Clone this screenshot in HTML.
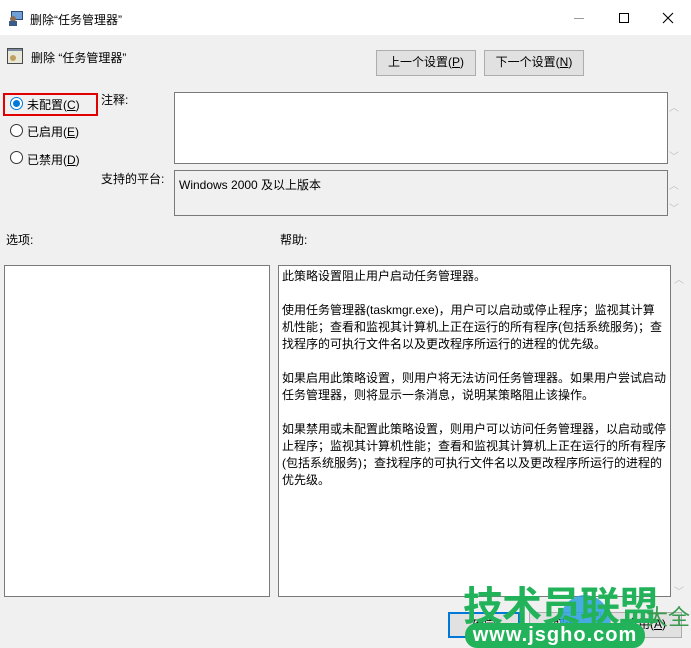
<!DOCTYPE html>
<html><head><meta charset="utf-8"><style>
*{margin:0;padding:0;box-sizing:border-box}
body{width:691px;height:648px;overflow:hidden;background:#f0f0f0;font-family:"Liberation Sans","Noto Sans CJK SC",sans-serif;font-size:12px;color:#000;position:relative}
.a{position:absolute}
.btn{position:absolute;background:#e1e1e1;border:1px solid #adadad;text-align:center;line-height:23px;font-size:12px}
.box{position:absolute;background:#fff;border:1px solid #7a7a7a}
.radio{position:absolute;width:13px;height:13px;border:1px solid #333;border-radius:50%;background:#fff}
.sb{position:absolute;color:#c0c0c0;font-size:10px}
</style></head><body>
<div class="a" style="left:0;top:0;width:691px;height:35px;background:#fff"></div>
<svg class="a" style="left:8px;top:10px" width="16" height="16"><rect x="3" y="1" width="12" height="9" fill="#2a4a7a"/><rect x="4" y="2" width="10" height="7" fill="#6fa0d8"/><circle cx="5" cy="9" r="3" fill="#8a6a50"/><rect x="1" y="11" width="8" height="5" fill="#3a5a8a"/></svg>
<div class="a" style="left:30px;top:11px">删除“任务管理器”</div>
<div class="a" style="left:574px;top:18px;width:10px;height:1px;background:#999"></div>
<div class="a" style="left:619px;top:13px;width:10px;height:10px;border:1px solid #000"></div>
<svg class="a" style="left:662px;top:12px" width="12" height="12"><path d="M1 1L11 11M11 1L1 11" stroke="#000" stroke-width="1.1"/></svg>

<svg class="a" style="left:7px;top:48px" width="16" height="16"><rect x="0" y="0" width="16" height="16" fill="#4a4a4a"/><rect x="1" y="3" width="14" height="12" fill="#e8e8d8"/><rect x="1" y="1" width="14" height="2" fill="#7a8aa0"/><circle cx="6" cy="10" r="3" fill="#c0a060"/></svg>
<div class="a" style="left:31px;top:49px">删除 “任务管理器”</div>
<div class="btn" style="left:376px;top:50px;width:100px;height:26px">上一个设置(<u>P</u>)</div>
<div class="btn" style="left:484px;top:50px;width:100px;height:26px">下一个设置(<u>N</u>)</div>

<div class="a" style="left:3px;top:93px;width:95px;height:23px;border:2px solid #e00000"></div>
<div class="radio" style="left:10px;top:97px;border-color:#0078d7"></div>
<div class="a" style="left:13px;top:100px;width:7px;height:7px;border-radius:50%;background:#0078d7"></div>
<div class="a" style="left:27px;top:96px">未配置(<u>C</u>)</div>
<div class="radio" style="left:10px;top:124px"></div>
<div class="a" style="left:27px;top:123px">已启用(<u>E</u>)</div>
<div class="radio" style="left:10px;top:151px"></div>
<div class="a" style="left:27px;top:151px">已禁用(<u>D</u>)</div>

<div class="a" style="left:101px;top:91px">注释:</div>
<div class="box" style="left:174px;top:92px;width:494px;height:72px"></div>
<div class="sb" style="left:669px;top:99px">︿</div>
<div class="sb" style="left:669px;top:148px">﹀</div>
<div class="a" style="left:101px;top:170px">支持的平台:</div>
<div class="box" style="left:174px;top:170px;width:494px;height:46px;background:#f0f0f0"></div>
<div class="a" style="left:179px;top:176px">Windows 2000 及以上版本</div>
<div class="sb" style="left:669px;top:177px">︿</div>
<div class="sb" style="left:669px;top:200px">﹀</div>

<div class="a" style="left:6px;top:231px">选项:</div>
<div class="a" style="left:280px;top:231px">帮助:</div>
<div class="box" style="left:4px;top:265px;width:266px;height:332px"></div>
<div class="box" style="left:278px;top:265px;width:393px;height:332px"></div>
<div class="sb" style="left:674px;top:271px">︿</div>
<div class="sb" style="left:674px;top:583px">﹀</div>
<div class="a" style="left:282px;top:268px;line-height:17px;font-size:12px;white-space:nowrap">此策略设置阻止用户启动任务管理器。<br><br>使用任务管理器(taskmgr.exe)，用户可以启动或停止程序；监视其计算<br>机性能；查看和监视其计算机上正在运行的所有程序(包括系统服务)；查<br>找程序的可执行文件名以及更改程序所运行的进程的优先级。<br><br>如果启用此策略设置，则用户将无法访问任务管理器。如果用户尝试启动<br>任务管理器，则将显示一条消息，说明某策略阻止该操作。<br><br>如果禁用或未配置此策略设置，则用户可以访问任务管理器，以启动或停<br>止程序；监视其计算机性能；查看和监视其计算机上正在运行的所有程序<br>(包括系统服务)；查找程序的可执行文件名以及更改程序所运行的进程的<br>优先级。</div>

<div class="btn" style="left:448px;top:612px;width:72px;height:26px;border:2px solid #0078d7">确定</div>
<div class="btn" style="left:529px;top:612px;width:72px;height:26px">取消</div>
<div class="btn" style="left:610px;top:612px;width:72px;height:26px">应用(<u>A</u>)</div>
<div class="a" style="left:560px;top:595px;width:50px;height:53px;border-radius:50%;background:#2aa0e0;opacity:.85"></div>
<div class="a" style="left:463px;top:580px;font-size:40px;font-weight:bold;color:#22b35a;letter-spacing:-1px;font-family:'Noto Sans CJK SC',sans-serif;line-height:46px">技术员联盟</div>
<div class="a" style="left:646px;top:600px;font-size:22px;color:#3a9a50;font-family:'Noto Sans CJK SC',sans-serif">大全</div>
<div class="a" style="left:465px;top:623px;width:180px;height:25px;border-radius:12px;background:#22b35a;color:#fff;font-size:20px;font-weight:bold;text-align:center;line-height:24px;letter-spacing:1px">www.jsgho.com</div>
</body></html>
